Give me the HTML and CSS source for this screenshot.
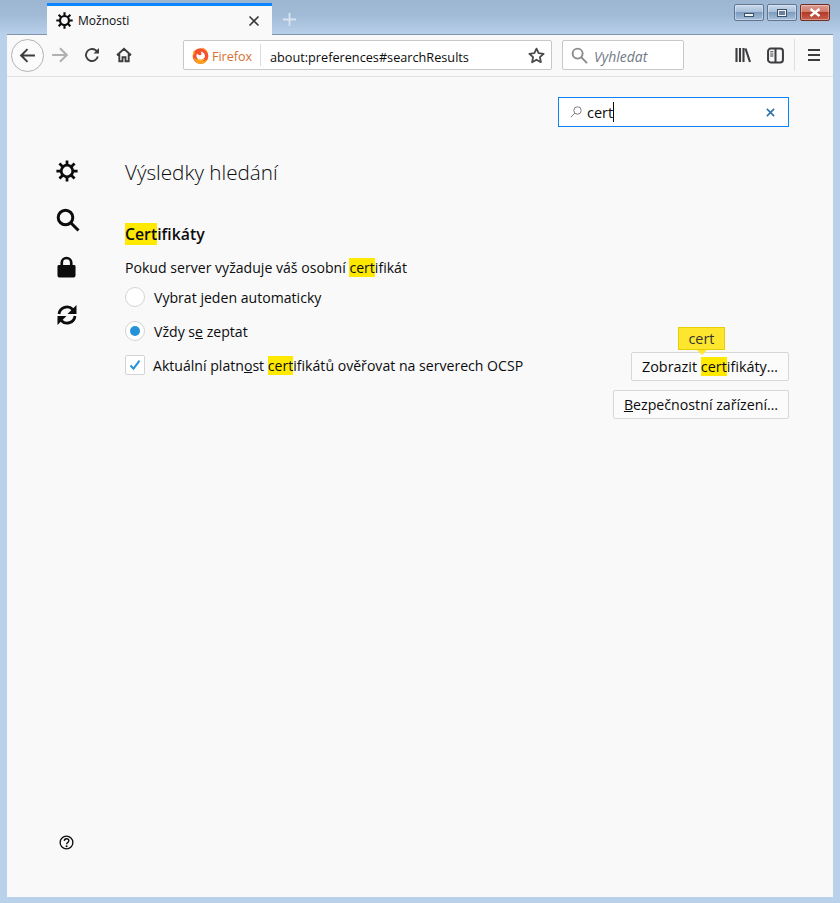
FILE: index.html
```html
<!DOCTYPE html>
<html lang="cs">
<head>
<meta charset="utf-8">
<title>Možnosti</title>
<link rel="stylesheet" href="styles.css">
</head>
<body>
<div class="window">
  <div class="titlebar">
    <div class="tab">
      <svg class="tab-gear" viewBox="0 0 16 16"><use href="#gear"/></svg>
      <span class="tab-title">Možnosti</span>
      <svg class="tab-close" viewBox="0 0 12 12"><path d="M1.500 1.500l9 9M10.500 1.500l-9 9"/></svg>
    </div>
    <svg class="new-tab" viewBox="0 0 16 16"><path d="M8 1v14M1 8h14"/></svg>
    <div class="win-controls">
      <div class="wc wc-min"><i></i></div>
      <div class="wc wc-max"><i></i></div>
      <div class="wc wc-close"><svg viewBox="0 0 12 9"><path d="M1.500 1l9 7M10.500 1l-9 7"/></svg></div>
    </div>
  </div>
  <div class="toolbar">
    <div class="back">
      <svg viewBox="0 0 16 16" class="tb-icon"><path d="M15 8H2M8 2L2 8l6 6"/></svg>
    </div>
    <svg viewBox="0 0 16 16" class="tb-icon forward"><path d="M1 8h13M8 2l6 6-6 6"/></svg>
    <svg viewBox="0 0 16 16" class="tb-icon reload"><path d="M13.800 9.500A6 6 0 1 1 11.500 3.100L14 5"/><path class="fill" d="M15 1v5.500H9.500z"/></svg>
    <svg viewBox="0 0 16 16" class="tb-icon home"><path d="M1 8.300L8 1.700l7 6.600M3.300 7v7.300h3.200v-4h3v4h3.200V7"/></svg>
    <div class="urlbar">
      <svg class="ff-logo" viewBox="0 0 16 16">
        <circle cx="8" cy="8.500" r="7.400" fill="#f4512c"/>
        <path d="M1.200 9.500C2 13 4.800 15.900 8 15.900c3.600 0 6.400-2.300 7.200-5.500-1.200 1.700-3.200 2.800-5.200 2.800-3.600 0-6.800-1.500-8.800-3.700z" fill="#ff9f1c"/>
        <path d="M4.300 10.500c1 1.800 2.600 2.500 4.200 2.500 1.700 0 3-.8 3.800-2-1.500.9-3.500 1-4.800.7-1.200-.2-2.400-.6-3.200-1.200z" fill="#ffd83a"/>
        <path d="M8 4.500c2.400 0 4.200 1.700 4.200 3.900 0 1.900-1.700 3.300-3.800 3.300-2.400 0-4.300-1.400-4.300-3.500 0-.8.400-1.500 1-2 .3 1.200 1.500 1.800 2.700 1.600 1.300-.3 1.600-2.200.2-3.300z" fill="#fff"/>
        <path d="M9.500 0.400c2.800 1 4.900 3 5.800 5.500-1.300-1.800-3-2.900-5-3.300-.4-.8-.6-1.500-.8-2.200z" fill="#ff8a1f"/>
        <path d="M1.300 3.400c.4 1 1 1.700 2 2.100-.9 1-1.500 2-2 3.200-.4-2 -.3-3.700 0-5.300z" fill="#ff9f1c"/>
      </svg>
      <span class="ff-label">Firefox</span>
      <span class="url-sep"></span>
      <span class="url-text">about:preferences#searchResults</span>
      <svg class="star" viewBox="0 0 16 16"><path d="M8 1.500l2 4.300 4.700.6-3.500 3.200.9 4.700L8 12l-4.100 2.300.9-4.700L1.300 6.400 6 5.800z"/></svg>
    </div>
    <div class="searchbar">
      <svg class="sb-icon" viewBox="0 0 18 18"><circle cx="7" cy="7" r="5.300"/><path d="M11 11l6 6"/></svg>
      <span class="sb-text">Vyhledat</span>
    </div>
    <div class="tb-right">
      <svg viewBox="0 0 16 16" class="tb-icon library"><path d="M1.500 1v14M5 1v14M8.500 1v14M10.500 1.500l4.500 13.500"/></svg>
      <svg viewBox="0 0 16 16" class="tb-icon sidebar-btn"><rect x="1" y="1.500" width="14" height="13" rx="2.500"/><path d="M8 1.500v13"/><path class="thin" d="M3 4.500h3M3 6.500h3M3 8.500h3"/></svg>
      <span class="tb-sep"></span>
      <svg viewBox="0 0 12 14" class="tb-icon menu"><path d="M0 2h12M0 7h12M0 12h12"/></svg>
    </div>
  </div>
  <div class="content">
    <nav class="sidebar">
      <svg class="cat cat-gear" viewBox="0 0 16 16"><use href="#gear"/></svg>
      <svg class="cat cat-search" viewBox="0 0 24 24"><circle cx="9.500" cy="9.500" r="7.300"/><path d="M15 15l7.500 7.500"/></svg>
      <svg class="cat cat-lock" viewBox="0 0 20 22"><path class="solid" d="M2 9h16a1.500 1.500 0 0 1 1.500 1.500V20a2 2 0 0 1-2 2h-15a2 2 0 0 1-2-2v-9.500A1.500 1.500 0 0 1 2 9z"/><path d="M5 10V6.500a5 5 0 0 1 10 0V10"/></svg>
      <svg class="cat cat-sync" viewBox="0 0 22 22"><path d="M3 10a8 8 0 0 1 13.800-4.500L19 8"/><path class="solid" d="M20.500 1v9h-9z"/><path d="M19 12a8 8 0 0 1-13.800 4.500L3 14"/><path class="solid" d="M1.500 21v-9h9z"/></svg>
      <svg class="help" viewBox="0 0 16 16"><circle cx="8" cy="8" r="6.800"/><path d="M5.600 6.300C5.700 4.800 6.800 4 8 4c1.400 0 2.500.9 2.500 2.100 0 1.800-2.400 1.900-2.400 3.700"/><circle class="dot" cx="8.100" cy="12" r="1.100"/></svg>
    </nav>
    <main class="main">
      <div class="search-row">
        <div class="pref-search">
          <svg class="ps-icon" viewBox="0 0 12 12"><circle cx="7.500" cy="4.500" r="3.700"/><path d="M4.800 7.200L.8 11.200"/></svg>
          <span class="ps-text">cert</span><span class="caret"></span>
          <svg class="ps-clear" viewBox="0 0 10 10"><path d="M1 1l8 8M9 1l-8 8"/></svg>
        </div>
      </div>
      <h1 class="headline">Výsledky hledání</h1>
      <h2 class="section"><mark>Cert</mark>ifikáty</h2>
      <p class="desc">Pokud server vyžaduje váš osobní <mark>cert</mark>ifikát</p>
      <div class="group">
        <div class="options">
          <label class="opt opt-radio"><span class="radio"></span><span>Vybrat <u>j</u>eden automaticky</span></label>
          <label class="opt opt-radio"><span class="radio on"></span><span>Vždy s<u>e</u> zeptat</span></label>
          <label class="opt opt-check"><span class="check"><svg viewBox="0 0 12 12"><path d="M1.500 6.500l3 3.200 6-8"/></svg></span><span>Aktuální platn<u>o</u>st <mark>cert</mark>ifikátů ověřovat na serverech OCSP</span></label>
        </div>
        <div class="buttons">
          <button class="btn btn-tip"><span class="tip">cert</span>Zobrazit <mark>cert</mark>ifikáty…</button>
          <button class="btn"><u>B</u>ezpečnostní zařízení…</button>
        </div>
      </div>
    </main>
  </div>
</div>
<svg class="defs" width="0" height="0"><defs>
  <g id="gear">
    <path fill="none" stroke="#0c0c0d" stroke-width="2" d="M8 .3v4M8 11.700v4M.3 8h4M11.700 8h4M2.500 2.500l2.800 2.800M10.700 10.700l2.800 2.800M13.500 2.500l-2.800 2.800M5.300 10.700l-2.800 2.800"/>
    <circle cx="8" cy="8" r="4.200" fill="none" stroke="#0c0c0d" stroke-width="2"/>
  </g>
</defs></svg>
</body>
</html>
```

FILE: styles.css
```css
* { box-sizing: border-box; }
html, body { margin: 0; height: 100%; }
body { font-family: "Open Sans", "Noto Sans", sans-serif; color: #0c0c0d; overflow: hidden; }
.defs { position: absolute; }
svg { display: block; flex: none; }
mark { background: #ffe900; color: inherit; }

.window {
  height: 903px;
  display: flex;
  flex-direction: column;
  padding: 0 7px 6px;
  background: linear-gradient(#9cb5d1 0, #a1bad6 15px, #b9d1ea 35px);
}

.titlebar { height: 35px; display: flex; align-items: flex-end; flex: none; border-bottom: 1px solid #7f93ab; }
.tab {
  margin-left: 40px;
  width: 225px;
  height: 32px;
  margin-bottom: -1px;
  display: flex;
  align-items: center;
  padding: 0 12px 0 9px;
  background: #f9f9fa;
  border-top: 3px solid #0a84ff;
}
.tab-gear { width: 17px; height: 17px; }
.tab-title { margin-left: 5px; font-size: 12px; flex: 1; }
.tab-close { width: 12px; height: 12px; fill: none; stroke: #3b3b3d; stroke-width: 1.600; }
.new-tab { width: 15px; height: 15px; margin: 0 0 7px 10px; fill: none; stroke: #d6e3f1; stroke-width: 2; }
.win-controls { margin-left: auto; display: flex; gap: 3px; align-self: flex-start; margin-top: 4px; margin-right: 3px; }
.wc {
  width: 30px; height: 17px;
  border: 1px solid #5f7692;
  border-radius: 2px;
  display: flex; align-items: center; justify-content: center;
  background: linear-gradient(#c8d8ea 0, #a9c0da 45%, #7f9cbf 50%, #a6c0dc 100%);
  box-shadow: inset 0 0 0 1px rgba(255,255,255,.35);
}
.wc i { display: block; background: #eef3f8; border: 1px solid #3e4f63; }
.wc-min i { width: 10px; height: 4px; margin-top: 5px; }
.wc-max i { width: 10px; height: 8px; box-shadow: inset 0 0 0 1px #eef3f8; background: #6d8099; }
.wc-close { background: linear-gradient(#dc9c90 0, #cf7a6a 45%, #b23a2a 50%, #c7604c 100%); border-color: #6e2c24; }
.wc-close svg { width: 12px; height: 9px; fill: none; stroke: #fff; stroke-width: 2.400; }

.toolbar {
  height: 42px;
  flex: none;
  display: flex;
  align-items: center;
  background: #f9f9fa;
  border-bottom: 1px solid #e1e1e2;
  padding: 0 0 1px 4px;
}
.tb-icon { width: 16px; height: 16px; fill: none; stroke: #3d3d3f; stroke-width: 1.900; }
.back {
  width: 33px; height: 33px; flex: none;
  border: 1px solid #b3b3b4;
  border-radius: 50%;
  background: #fbfbfb;
  display: flex; align-items: center; justify-content: center;
}
.back .tb-icon { width: 17px; height: 17px; }
.forward { margin-left: 7px; stroke: #b1b1b3; width: 18px; height: 18px; }
.reload { margin-left: 15px; }
.reload .fill { fill: #3d3d3f; stroke: none; }
.home { margin-left: 16px; }
.urlbar {
  margin-left: 51px;
  width: 369px;
  height: 30px;
  display: flex;
  align-items: center;
  background: #fff;
  border: 1px solid #c8c8c9;
  border-radius: 2px;
  padding: 0 6px 0 8px;
}
.ff-logo { width: 17px; height: 17px; }
.ff-label { margin-left: 3px; padding-top: 3px; font-size: 12.500px; color: #d56f33; }
.url-sep { width: 1px; height: 22px; background: #dcdcdc; margin: 0 9px 0 8px; }
.url-text { flex: 1; padding-top: 3px; font-size: 12.700px; white-space: nowrap; }
.star { width: 17px; height: 17px; fill: none; stroke: #4a4a4c; stroke-width: 1.700; stroke-linejoin: round; }
.searchbar {
  margin-left: 10px;
  width: 122px;
  height: 30px;
  display: flex;
  align-items: center;
  background: #fff;
  border: 1px solid #c8c8c9;
  border-radius: 2px;
  padding-left: 8px;
}
.sb-icon { width: 17px; height: 17px; fill: none; stroke: #8a8a8c; stroke-width: 2; }
.sb-text { margin-left: 6px; padding-top: 3px; font-size: 14px; font-style: italic; color: #6f7a86; }
.tb-right { margin-left: auto; display: flex; align-items: center; padding-right: 13px; }
.library { width: 16px; height: 16px; stroke-width: 2.100; }
.sidebar-btn { margin-left: 16px; width: 17px; height: 17px; stroke-width: 1.900; }
.sidebar-btn .thin { stroke-width: 1; }
.tb-sep { width: 1px; height: 32px; background: #dedede; margin: 0 13px 0 10px; }
.menu { width: 12px; height: 14px; stroke-width: 2; }

.content { flex: 1; min-height: 0; display: flex; background: #f9f9fa; }
.sidebar { width: 118px; flex: none; display: flex; flex-direction: column; padding: 83px 0 47px 49px; }
.cat { fill: none; stroke: #0c0c0d; }
.cat-gear { width: 22px; height: 22px; }
.cat-search { width: 24px; height: 24px; margin-top: 26px; stroke-width: 3; }
.cat-lock { width: 19px; height: 22px; margin: 24px 0 0 1px; stroke-width: 2.800; }
.cat-lock .solid, .cat-sync .solid { fill: #0c0c0d; stroke: none; }
.cat-sync { width: 22px; height: 22px; margin-top: 26px; stroke-width: 2.800; }
.help { margin: auto 0 0 3px; width: 15px; height: 15px; fill: none; stroke: #0c0c0d; stroke-width: 1.400; }
.help .dot { fill: #0c0c0d; stroke: none; }

.main { flex: 1; padding: 20px 44px 0 0; font-size: 14.100px; }
.search-row { display: flex; justify-content: flex-end; }
.pref-search {
  width: 231px; height: 30px;
  display: flex; align-items: center;
  background: #fff;
  border: 1px solid #0a84ff;
  padding: 0 13px 0 11px;
}
.ps-icon { width: 12px; height: 12px; fill: none; stroke: #7f7f80; stroke-width: 1; }
.ps-text { margin-left: 5px; font-size: 14.500px; }
.caret { width: 1px; height: 20px; background: #0c0c0d; }
.ps-clear { margin-left: auto; width: 9px; height: 9px; fill: none; stroke: #2d6da8; stroke-width: 1.700; }
.headline { margin: 29px 0 0; font-size: 20.700px; font-weight: 300; line-height: 32px; color: #0c0c0d; }
.section { margin: 34px 0 0; font-size: 15.800px; font-weight: 600; line-height: 24px; }
.desc { margin: 11px 0 0; line-height: 21px; }
.group { display: flex; justify-content: space-between; }
.options { display: flex; flex-direction: column; }
.opt { display: flex; align-items: center; }
.opt-radio { height: 20px; gap: 9px; margin-top: 9px; }
.opt-radio + .opt-radio { margin-top: 14px; }
.opt-check { height: 20px; gap: 8px; margin-top: 14px; }
.radio {
  width: 20px; height: 20px; flex: none;
  border: 1px solid #d4d4d5; border-radius: 50%; background: #fff;
  display: flex; align-items: center; justify-content: center;
}
.radio.on::after { content: ""; width: 10px; height: 10px; border-radius: 50%; background: #2592d8; }
.check {
  width: 20px; height: 20px; flex: none;
  border: 1px solid #d4d4d5; border-radius: 2px; background: #fff;
  display: flex; align-items: center; justify-content: center;
}
.check svg { width: 12px; height: 12px; fill: none; stroke: #2592d8; stroke-width: 2; }
.buttons { display: flex; flex-direction: column; align-items: flex-end; gap: 9px; margin-top: 74px; }
.btn {
  position: relative;
  height: 29px;
  padding: 0 10px;
  font: inherit;
  font-size: 14.200px;
  color: #0c0c0d;
  background: #fbfbfb;
  border: 1px solid #d7d7d8;
  border-radius: 2px;
  white-space: nowrap;
}
.btn-tip { font-size: 14.400px; }
.tip {
  position: absolute;
  left: 46px; top: -26px;
  width: 47px; height: 23px;
  background: #ffe62e;
  border: 1px solid #e8cf00;
  display: flex; align-items: center; justify-content: center;
  color: #333;
}
.tip::after {
  content: "";
  position: absolute;
  left: 18px; bottom: -6px;
  width: 0; height: 0;
  border-left: 5px solid transparent;
  border-right: 5px solid transparent;
  border-top: 5px solid #ffe62e;
}
```
